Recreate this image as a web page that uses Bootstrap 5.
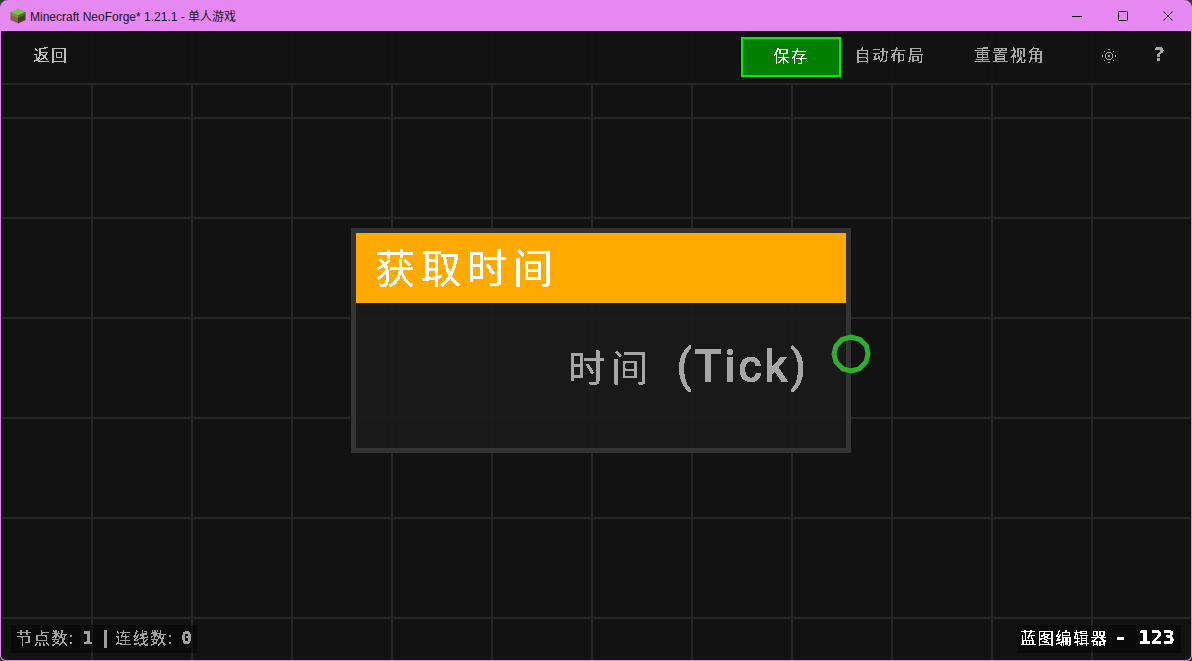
<!DOCTYPE html>
<html lang="zh-CN">
<head>
  <meta charset="UTF-8">
  <title>Minecraft NeoForge* 1.21.1 - 单人游戏</title>
  <link href="https://cdn.jsdelivr.net/npm/bootstrap@5.3.0/dist/css/bootstrap.min.css" rel="stylesheet">
  <style>
    html, body { height: 100%; margin: 0; background: #3a3a3a; overflow: hidden; }
    .app-window {
      height: 661px; background: #e688f2; border: 1px solid #e688f2; border-top: 0;
      border-radius: 8px 8px 6px 6px; overflow: hidden;
    }
    .title-bar { height: 31px; font: 12px "Liberation Sans", "Noto Sans CJK SC", sans-serif; color: #1b1020; }
    .title-icon { margin-left: 9px; margin-right: 4px; }
    .win-ctrl { width: 45.5px; height: 31px; }
    .stage {
      background-color: #121212;
      background-image:
        linear-gradient(to right, #262626 2px, transparent 2px),
        linear-gradient(to bottom, #262626 2px, transparent 2px);
      background-size: 100px 100px;
      background-position: 90px 86px;
    }
    .tool-bar {
      height: 54px; background: rgba(18, 18, 18, .92); border-bottom: 2px solid #262626;
      font: 16px "Noto Sans CJK SC", sans-serif; letter-spacing: 1.8px; color: #a8a8a8;
    }
    .tool-item { height: 40px; margin-top: 6px; line-height: 35px; text-align: center; filter: url(#crisp); }
    .tool-back { width: 100px; color: #bdbdbd; margin-right: auto; }
    .tool-save { width: 100px; height: 40px; background: #007f00; border: 2px solid #00ee00; color: #fff; margin-top: 6px; line-height: 33px; text-align: center; }
    .tool-save span { filter: url(#crisp); display: inline-block; }
    .tool-layout { width: 100px; margin-left: -1px; }
    .tool-view { width: 100px; margin-left: 20px; }
    .tool-theme { width: 50px; margin-left: 24px; padding-top: 12px; }
    .tool-help { width: 50px; margin-left: 1px; margin-right: 6px; font: bold 20px/34px "DejaVu Sans Mono", monospace; }
    .bp-node {
      position: absolute; left: 350px; top: 143px; width: 500px; height: 225px;
      background: rgba(26, 26, 26, .95); border: 5px solid #333;
    }
    .bp-head {
      height: 70px; background: #ffaa00; color: #fff; padding-left: 19px;
      font: 40px/66px "Noto Sans CJK SC", sans-serif; letter-spacing: 6px;
    }
    .bp-head span { display: inline-block; filter: url(#crisp); }
    .bp-port-row {
      height: 44px; margin-top: 41px; padding-right: 38px; color: #a6a6a6;
      font: 37px/44px "Noto Sans CJK SC", sans-serif; letter-spacing: 6px; filter: url(#crisp);
    }
    .bp-port-row b { font: 500 46px/44px "Roboto", sans-serif; letter-spacing: 2px; margin-left: 22px; }
    .bp-pin { position: absolute; left: 475px; top: 101px; }
    .status-tag {
      position: absolute; bottom: 7px; height: 28px; background: rgba(0, 0, 0, .4);
      font: 16px/25px "Noto Sans CJK SC", sans-serif; letter-spacing: 1.7px; white-space: nowrap;
    }
    .status-left { left: 10px; width: 186px; padding-left: 5px; color: #a0a0a0; }
    .status-right { right: 10px; width: 164px; padding-left: 3px; color: #fff; }
    .status-tag span { display: inline-block; filter: url(#crisp); }
    .status-tag b { font: bold 18px "DejaVu Sans Mono", monospace; letter-spacing: 0; }
    .status-tag .gap-l { margin-left: 7px; }
    .status-tag .gap-r { margin-left: 6px; font-size: 20px; }
    .status-tag .bar { margin: 0 4px 0 7px; }
  </style>
</head>
<body>

<svg width="0" height="0" class="position-absolute">
  <filter id="crisp" x="0" y="0" width="100%" height="100%" color-interpolation-filters="sRGB">
    <feComponentTransfer>
      <feFuncA type="discrete" tableValues="0 1 1"/>
    </feComponentTransfer>
  </filter>
</svg>

<div class="app-window d-flex flex-column">
  <!-- title bar -->
  <div class="title-bar d-flex align-items-center flex-shrink-0">
    <svg class="title-icon" width="16" height="16" viewBox="0 0 16 16">
      <polygon points="8,0.5 15.5,4 8,7.5 0.5,4" fill="#7cc242"/>
      <polygon points="0.5,4 8,7.5 8,15.5 0.5,12" fill="#8a6444"/>
      <polygon points="15.5,4 8,7.5 8,15.5 15.5,12" fill="#4d3a29"/>
      <polygon points="0.5,4 8,7.5 8,10 0.5,6.5" fill="#5aa832"/>
      <polygon points="15.5,4 8,7.5 8,10 15.5,6.5" fill="#3f7f26"/>
    </svg>
    <span class="flex-grow-1">Minecraft NeoForge* 1.21.1 - 单人游戏</span>
    <div class="d-flex">
      <div class="win-ctrl d-flex align-items-center justify-content-center">
        <svg width="12" height="12" viewBox="0 0 12 12"><path d="M1 6.5h10" stroke="#111" fill="none"/></svg>
      </div>
      <div class="win-ctrl d-flex align-items-center justify-content-center">
        <svg width="12" height="12" viewBox="0 0 12 12"><rect x="1.5" y="1.5" width="9" height="9" rx="1" stroke="#111" fill="none"/></svg>
      </div>
      <div class="win-ctrl d-flex align-items-center justify-content-center">
        <svg width="12" height="12" viewBox="0 0 12 12"><path d="M1.5 1.5l9 9M10.5 1.5l-9 9" stroke="#111" fill="none"/></svg>
      </div>
    </div>
  </div>

  <div class="stage flex-grow-1 d-flex flex-column">
    <!-- toolbar -->
    <div class="tool-bar d-flex flex-shrink-0">
      <div class="tool-item tool-back">返回</div>
      <div class="tool-save"><span>保存</span></div>
      <div class="tool-item tool-layout">自动布局</div>
      <div class="tool-item tool-view">重置视角</div>
      <div class="tool-item tool-theme">
        <svg class="d-block mx-auto" width="14" height="14" viewBox="0 0 14 14" shape-rendering="crispEdges" fill="#a8a8a8">
          <path d="M6 0h2v1H6zM6 13h2v1H6zM0 6h1v2H0zM13 6h1v2h-1zM2 2h1v1H2zM11 2h1v1h-1zM2 11h1v1H2zM11 11h1v1h-1zM5 3h4v1H5zM5 10h4v1H5zM3 5h1v4H3zM10 5h1v4h-1zM4 4h1v1H4zM9 4h1v1H9zM4 9h1v1H4zM9 9h1v1H9zM6 6h2v2H6z"/>
        </svg>
      </div>
      <div class="tool-item tool-help">?</div>
    </div>

    <!-- node canvas -->
    <div class="flex-grow-1 position-relative">
      <div class="bp-node">
        <div class="bp-head"><span>获取时间</span></div>
        <div class="bp-port-row text-end">时间<b>(Tick)</b></div>
        <svg class="bp-pin" width="40" height="40" viewBox="0 0 40 40">
          <polygon points="20,3 29,5.5 35.5,12 37,20 35,28 28,35 20,37 12,35 5,28 3,20 5,12 11,5.5" fill="none" stroke="#2eb02e" stroke-width="5"/>
        </svg>
      </div>
      <div class="status-tag status-left"><span>节点数:<b class="gap-l">1</b><b class="bar">|</b>连线数:<b class="gap-l">0</b></span></div>
      <div class="status-tag status-right"><span>蓝图编辑器<b class="gap-r">- 123</b></span></div>
    </div>
  </div>
</div>

</body>
</html>
